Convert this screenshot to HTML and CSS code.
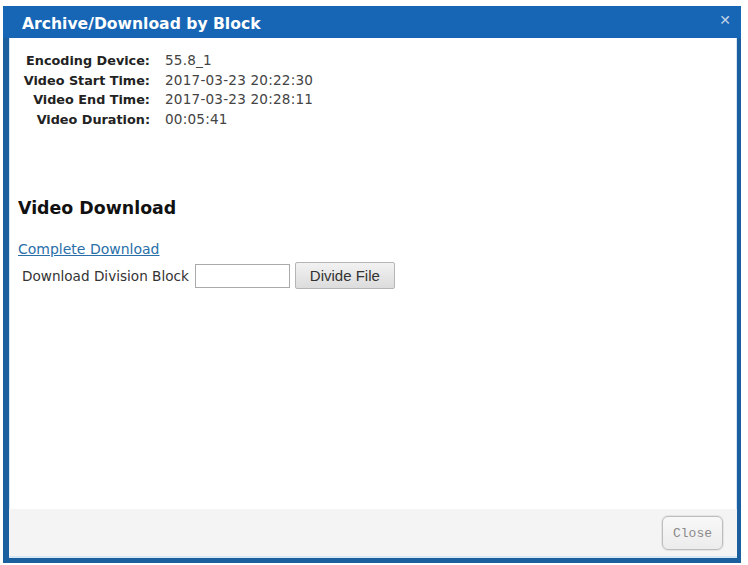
FILE: index.html
```html
<!DOCTYPE html>
<html lang="en">
<head>
<meta charset="UTF-8">
<title>Archive/Download by Block</title>
<link rel="stylesheet" href="styles.css">
</head>
<body>

<div class="dialog">
  <div class="titlebar">
    <span class="title">Archive/Download by Block</span>
    <span class="close-x">&#x2715;</span>
  </div>

  <div class="content">
    <div class="info">
      <span class="label">Encoding Device:</span><span class="value">55.8_1</span>
      <span class="label">Video Start Time:</span><span class="value">2017-03-23 20:22:30</span>
      <span class="label">Video End Time:</span><span class="value">2017-03-23 20:28:11</span>
      <span class="label">Video Duration:</span><span class="value">00:05:41</span>
    </div>

    <h3>Video Download</h3>
    <a href="#" class="link">Complete Download</a>
    <div class="division">
      <span>Download Division Block</span>
      <input type="text" class="block-input">
      <button class="btn-divide">Divide File</button>
    </div>
  </div>

  <div class="footer">
    <button class="btn-close">Close</button>
  </div>
</div>

</body>
</html>
```

FILE: styles.css
```css
body { margin:0; background:#fff; font-family:"DejaVu Sans", Verdana, sans-serif; }

.dialog { box-sizing:border-box; width:738px; height:557px; margin:6px 0 0 3px; display:flex; flex-direction:column; background:#1a63ad; border:solid #1b5f9f; border-width:0 4px 5px 6px; }
.titlebar { height:32px; flex:none; display:flex; align-items:center; justify-content:space-between; background:#1766b6; margin:0 -4px 0 -6px; padding:3px 10px 0 19px; box-sizing:border-box; }
.title { color:#fff; font-weight:bold; font-size:15.6px; }
.close-x { color:#c3d3e6; font-size:14px; font-weight:bold; margin-top:-8px; }

.content { flex:1; background:#fff; padding:13px 0 0 9px; box-shadow:inset 1px 0 0 #d5e5f3, inset -1px 0 0 #d5e5f3; }

.info { display:grid; grid-template-columns:132px auto; column-gap:15px; row-gap:0; justify-content:start; }
.label { font-weight:bold; font-size:12.8px; color:#222; text-align:right; line-height:19.6px; }
.value { font-size:13.6px; color:#444; line-height:19.6px; letter-spacing:0.2px; }

h3 { margin:67px 0 0 0; font-size:17.4px; font-weight:bold; color:#111; line-height:24px; }

.link { display:inline-block; margin-top:21px; font-size:14px; color:#2a6fa8; text-decoration:underline; }

.division { display:flex; align-items:center; margin-top:4px; padding-left:4px; font-size:13.6px; color:#333; }
.block-input { box-sizing:border-box; width:95px; height:24px; margin:0 0 0 6px; border:1px solid #aaa; padding:2px; }
.btn-divide { box-sizing:border-box; width:100px; height:27px; margin-left:5px; border:1px solid #b5b5b5; border-radius:2px; background:linear-gradient(#f2f2f2, #dcdcdc); font-family:"Liberation Sans", Arial, sans-serif; font-size:15px; color:#333; padding:0; }

.footer { height:49px; flex:none; box-sizing:border-box; background:#f4f4f4; border-bottom:2px solid #d8e7f4; display:flex; align-items:center; justify-content:flex-end; padding:1px 14px 0 0; }
.btn-close { box-sizing:border-box; width:61px; height:34px; border:1px solid #bdbdbd; border-radius:6px; background:linear-gradient(#f8f8f8, #ececec); font-family:"Liberation Mono", "Courier New", monospace; font-size:13px; color:#8a8a8a; padding:0; box-shadow:0 0 0 1px #e4e4e4; }
```
